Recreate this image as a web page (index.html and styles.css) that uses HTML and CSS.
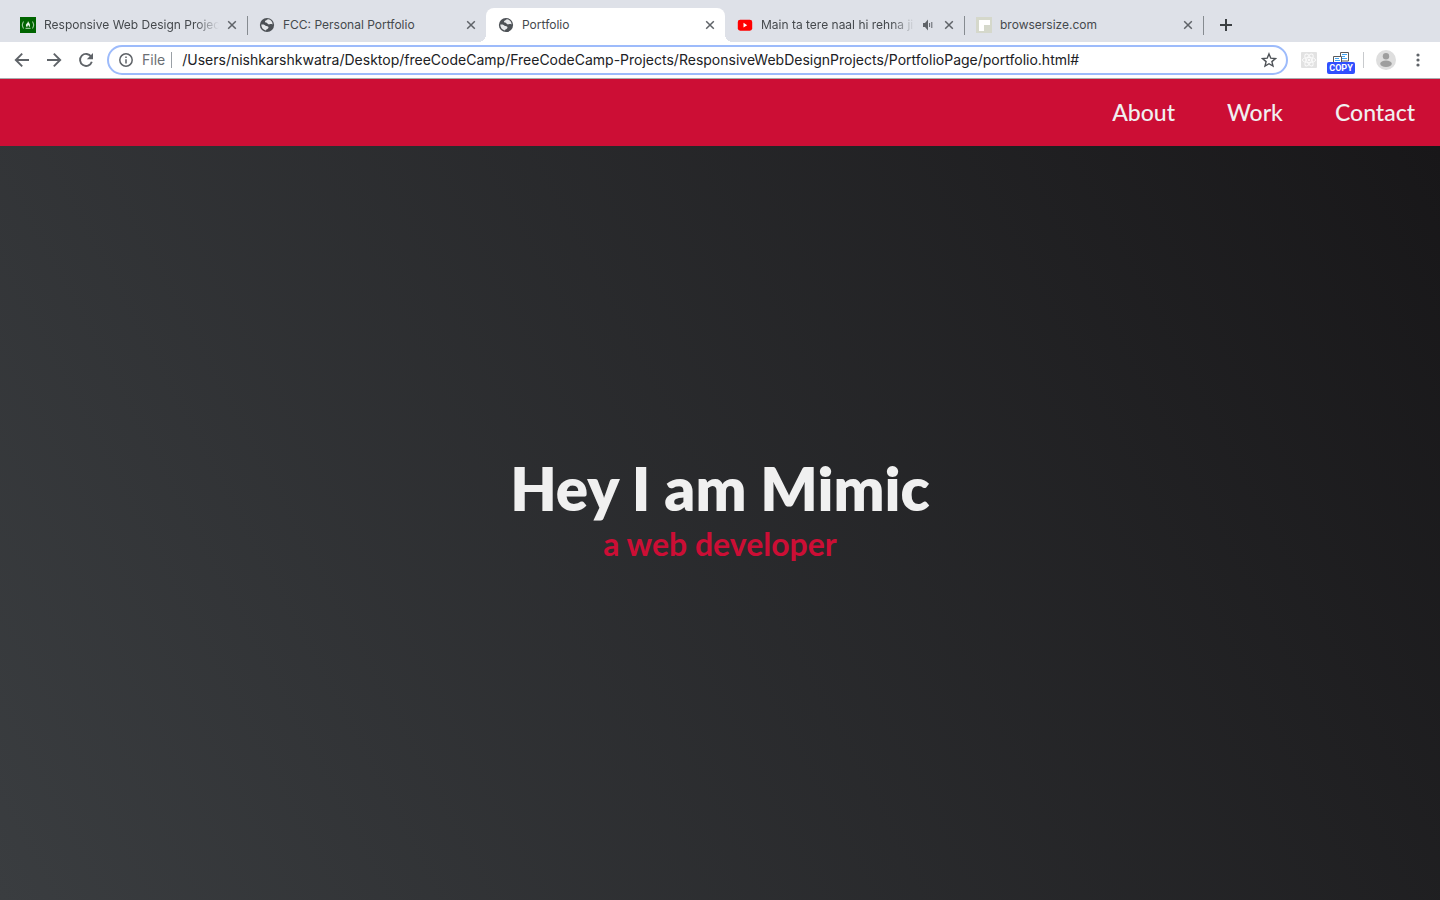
FILE: index.html
```html
<!DOCTYPE html>
<html lang="en">
<head>
<meta charset="utf-8">
<title>Portfolio</title>
<link rel="stylesheet" href="styles.css">
</head>
<body>
<svg class="defs" aria-hidden="true">
  <symbol id="globe" viewBox="0 0 16 16"><circle cx="8" cy="8" r="7.1" fill="#4d5156"/><path d="M9.3 2.3C7.8 2.2 8 3.4 6.9 3.6C5.8 3.9 5.7 5 6.6 5.5C7.4 6 8.2 5.6 8.5 6.4C8.8 7.2 9.8 7.5 10.8 7.2C11.7 6.9 12.6 7 13.6 7.4C13.7 4.8 11.8 2.7 9.3 2.3ZM2.3 7.6C2.3 11 4.6 13.2 7.1 13.6C6.8 12.5 7.8 12.4 8.5 12C9.6 11.4 9.8 10.2 9 9.6C8 8.9 7.2 9.4 6.3 8.5C5.5 7.6 4 7.6 2.3 7.6Z" fill="#e6e8eb"/></symbol>
  <symbol id="close" viewBox="0 0 10 10"><path d="M1.2 1.2L8.8 8.8M8.8 1.2L1.2 8.8" stroke="#5f6368" stroke-width="1.5" fill="none"/></symbol>
</svg>
<header class="browser">
  <div class="tabs">
    <div class="tab">
      <svg class="favicon" viewBox="0 0 16 16"><rect width="16" height="16" fill="#006400"/><path d="M3.4 4.5Q1 8 3.4 11.5M12.6 4.5Q15 8 12.6 11.5M5.5 11.3H10.5" stroke="#b5d5b5" stroke-width="1" fill="none"/><path d="M8 4C8.4 5.5 10.4 6.6 10 8.8Q9.7 10 9 10.2Q9.2 8.6 8 8Q7.8 9 7 10.2C5.4 9.3 5.8 7.5 6.8 6.6Q8 5.5 8 4Z" fill="#e5f3e5"/></svg>
      <span class="title fade">Responsive Web Design Projects</span>
      <button class="close" aria-label="Close tab"><svg><use href="#close"/></svg></button>
    </div>
    <div class="tab">
      <svg class="favicon"><use href="#globe"/></svg>
      <span class="title">FCC: Personal Portfolio</span>
      <button class="close" aria-label="Close tab"><svg><use href="#close"/></svg></button>
    </div>
    <div class="tab active">
      <svg class="favicon"><use href="#globe"/></svg>
      <span class="title">Portfolio</span>
      <button class="close" aria-label="Close tab"><svg><use href="#close"/></svg></button>
    </div>
    <div class="tab">
      <svg class="favicon" viewBox="0 0 16 16"><rect x=".8" y="2.7" width="14.4" height="11" rx="2.4" fill="#f00"/><path d="M6.5 5.8L10.2 8.2L6.5 10.6Z" fill="#fff"/></svg>
      <span class="title fade">Main ta tere naal hi rehna ji</span>
      <button class="audio" aria-label="Mute tab"><svg viewBox="0 0 10 12"><path d="M0 4H2L5 .5V11.5L2 8H0Z" fill="#5f6368"/><path d="M6.6 4V8M8.8 3V9" stroke="#5f6368" stroke-width="1"/></svg></button>
      <button class="close" aria-label="Close tab"><svg><use href="#close"/></svg></button>
    </div>
    <div class="tab">
      <svg class="favicon" viewBox="0 0 16 16"><rect width="16" height="16" fill="#d5d8cb"/><path d="M3 3H14V8H8V14H3Z" fill="#fff"/></svg>
      <span class="title">browsersize.com</span>
      <button class="close" aria-label="Close tab"><svg><use href="#close"/></svg></button>
    </div>
    <button class="new-tab" aria-label="New tab"><svg viewBox="0 0 12 12"><path d="M6 0V12M0 6H12" stroke="#3c4043" stroke-width="2"/></svg></button>
  </div>
  <div class="toolbar">
    <button class="nav-button" aria-label="Back"><svg viewBox="0 0 16 16"><path d="M15 8H2M8.2 1.6L1.8 8L8.2 14.4" /></svg></button>
    <button class="nav-button" aria-label="Forward"><svg viewBox="0 0 16 16"><path d="M1 8H14M7.8 1.6L14.2 8L7.8 14.4"/></svg></button>
    <button class="nav-button" aria-label="Reload"><svg viewBox="0 0 16 16"><path d="M13.2 4.8A6 6 0 1 0 13.8 9.7"/><path d="M15 1V7.2H8.8Z" class="solid"/></svg></button>
    <form class="address">
      <svg class="info" viewBox="0 0 14 14"><circle cx="7" cy="7" r="6.2" fill="none" stroke="#5f6368" stroke-width="1.5"/><path d="M7 6.2V10.5M7 3.6V5.1" stroke="#5f6368" stroke-width="1.5"/></svg>
      <label class="scheme" for="url">File</label>
      <input class="url" id="url" type="text" spellcheck="false" value="/Users/nishkarshkwatra/Desktop/freeCodeCamp/FreeCodeCamp-Projects/ResponsiveWebDesignProjects/PortfolioPage/portfolio.html#">
      <button class="star" type="button" aria-label="Bookmark"><svg viewBox="0 0 16 16"><path d="M8 1.9L9.8 6.2L14.4 6.6L10.9 9.6L12 14.1L8 11.7L4 14.1L5.1 9.6L1.6 6.6L6.2 6.2Z" fill="none" stroke="#4d5156" stroke-width="1.4"/></svg></button>
    </form>
    <div class="extensions">
      <button class="react" aria-label="React tools"><svg viewBox="0 0 16 16"><rect width="16" height="16" rx="1" fill="#e2e2e2"/><g fill="none" stroke="#fafafa" stroke-width="1"><ellipse cx="8" cy="8" rx="6.6" ry="2.6"/><ellipse cx="8" cy="8" rx="6.6" ry="2.6" transform="rotate(60 8 8)"/><ellipse cx="8" cy="8" rx="6.6" ry="2.6" transform="rotate(120 8 8)"/></g><circle cx="8" cy="8" r="1.3" fill="#fafafa"/></svg></button>
      <button class="copy" aria-label="Copy"><svg viewBox="0 0 16 10"><g fill="#fff" stroke="#5b5b5b"><path d="M.5 10V4.5H8.5V10M7.5 4V.5H15.5V9H8.5"/></g><path d="M9 2.5H14M9 4.5H12M9 6.5H14M2 6.5H6M2 8.5H7" stroke="#42a5f5"/></svg><span class="badge">COPY</span></button>
      <button class="avatar" aria-label="Profile"><svg viewBox="0 0 20 20"><circle cx="10" cy="10" r="10" fill="#dedede"/><circle cx="10" cy="6.2" r="3.2" fill="#9e9e9e"/><ellipse cx="10" cy="13.8" rx="5.8" ry="3.2" fill="#9e9e9e"/></svg></button>
      <button class="menu" aria-label="Menu"><svg viewBox="0 0 4 14"><g fill="#5f6368"><circle cx="2" cy="2" r="1.6"/><circle cx="2" cy="7" r="1.6"/><circle cx="2" cy="12" r="1.6"/></g></svg></button>
    </div>
  </div>
</header>
<nav class="site-nav">
  <a href="#about">About</a>
  <a href="#work">Work</a>
  <a href="#contact">Contact</a>
</nav>
<main class="hero">
  <h1>Hey I am Mimic</h1>
  <p>a web developer</p>
</main>
</body>
</html>
```
FILE: styles.css
```css
* { box-sizing: border-box; }

body {
  margin: 0;
  min-height: 100vh;
  display: flex;
  flex-direction: column;
  font-family: Lato, sans-serif;
}

button {
  border: 0;
  padding: 0;
  background: none;
  display: flex;
  align-items: center;
  justify-content: center;
  flex: none;
}

svg { display: block; flex: none; }
.defs { position: absolute; width: 0; height: 0; }

.browser {
  font-family: Inter, Roboto, sans-serif;
  background: #dee1e8;
}

/* Tab strip */
.tabs {
  display: flex;
  height: 42px;
  padding: 8px 0 0 8px;
}

.tab {
  flex: 0 1 239px;
  min-width: 0;
  position: relative;
  display: flex;
  align-items: center;
  padding: 0 10px 0 12px;
  gap: 8px;
  font-size: 12px;
  color: #45494d;
}

.tab:not(.active)::after {
  content: "";
  position: absolute;
  right: -1px;
  top: 8px;
  width: 1px;
  height: 19px;
  background: #868b90;
}

.tab:has(+ .active)::after { display: none; }

.tab.active {
  background: #fff;
  border-radius: 8px 8px 0 0;
}

.tab.active::before,
.tab.active::after {
  content: "";
  position: absolute;
  bottom: 0;
  width: 8px;
  height: 8px;
}

.tab.active::before {
  left: -8px;
  background: radial-gradient(circle at 0 0, transparent 8px, #fff 8px);
}

.tab.active::after {
  right: -8px;
  background: radial-gradient(circle at 100% 0, transparent 8px, #fff 8px);
}

.favicon { width: 16px; height: 16px; }

.title {
  flex: 1;
  min-width: 0;
  overflow: hidden;
  white-space: nowrap;
  line-height: 18px;
}

.fade {
  -webkit-mask-image: linear-gradient(to left, transparent, #000 24px);
  mask-image: linear-gradient(to left, transparent, #000 24px);
}

.close svg { width: 10px; height: 10px; }
.audio { margin-right: 3px; }
.audio svg { width: 10px; height: 12px; }
.new-tab { width: 46px; }
.new-tab svg { width: 12px; height: 12px; }

/* Toolbar */
.toolbar {
  display: flex;
  align-items: center;
  height: 37px;
  padding: 0 12px 0 6px;
  background: #fff;
  border-bottom: 1px solid #a9abae;
}

.nav-button { width: 32px; height: 30px; }
.nav-button svg {
  width: 16px;
  height: 16px;
  fill: none;
  stroke: #5f6368;
  stroke-width: 1.9;
}
.nav-button .solid { fill: #5f6368; stroke: none; }

.address {
  flex: 1;
  min-width: 0;
  display: flex;
  align-items: center;
  height: 30px;
  margin-left: 5px;
  padding: 0 9px 0 10px;
  border: 2px solid #9dbbfb;
  border-radius: 15px;
}

.info { width: 14px; height: 14px; }

.scheme {
  padding: 0 6px 0 9px;
  margin-right: 10px;
  border-right: 1px solid #9aa0a6;
  font-size: 14px;
  line-height: 16px;
  color: #6b6f74;
}

.url {
  flex: 1;
  min-width: 0;
  border: 0;
  padding: 0 0 2px;
  outline: 0;
  background: none;
  font: 14px Inter, Roboto, sans-serif;
  color: #202124;
}

.star svg { width: 16px; height: 16px; }

.extensions {
  display: flex;
  align-items: center;
  padding-left: 13px;
}

.react svg { width: 16px; height: 16px; }

.copy {
  flex-direction: column;
  width: 28px;
  margin: 0 8px 0 10px;
  padding-top: 5px;
}
.copy svg { width: 16px; height: 10px; }

.badge {
  width: 28px;
  border-radius: 2px;
  background: #304ffe;
  color: #fff;
  font: bold 9px/12px Roboto, sans-serif;
  text-align: center;
}

.avatar {
  height: 16px;
  padding-left: 12px;
  border-left: 1px solid #c8cacd;
}
.avatar svg { width: 20px; height: 20px; }
.menu { width: 20px; height: 20px; margin-left: 12px; }
.menu svg { width: 4px; height: 14px; }

/* Portfolio page */
.site-nav {
  display: flex;
  justify-content: flex-end;
  align-items: center;
  gap: 52px;
  height: 67px;
  padding: 0 25px 2px;
  background: #cc0e35;
}

.site-nav a {
  color: #f0f0f0;
  font-size: 23px;
  font-weight: 500;
  text-decoration: none;
}

.hero {
  flex: 1;
  display: flex;
  flex-direction: column;
  align-items: center;
  justify-content: center;
  padding-bottom: 30px;
  background: linear-gradient(62deg, #3a3d40 0%, #181719 100%);
}

.hero h1 {
  margin: 0;
  color: #f0f0f0;
  font-size: 60px;
  font-weight: 800;
  line-height: 72px;
}

.hero p {
  margin: 0;
  color: #cc0e35;
  font-size: 32px;
  font-weight: 700;
  line-height: 40px;
}
```
